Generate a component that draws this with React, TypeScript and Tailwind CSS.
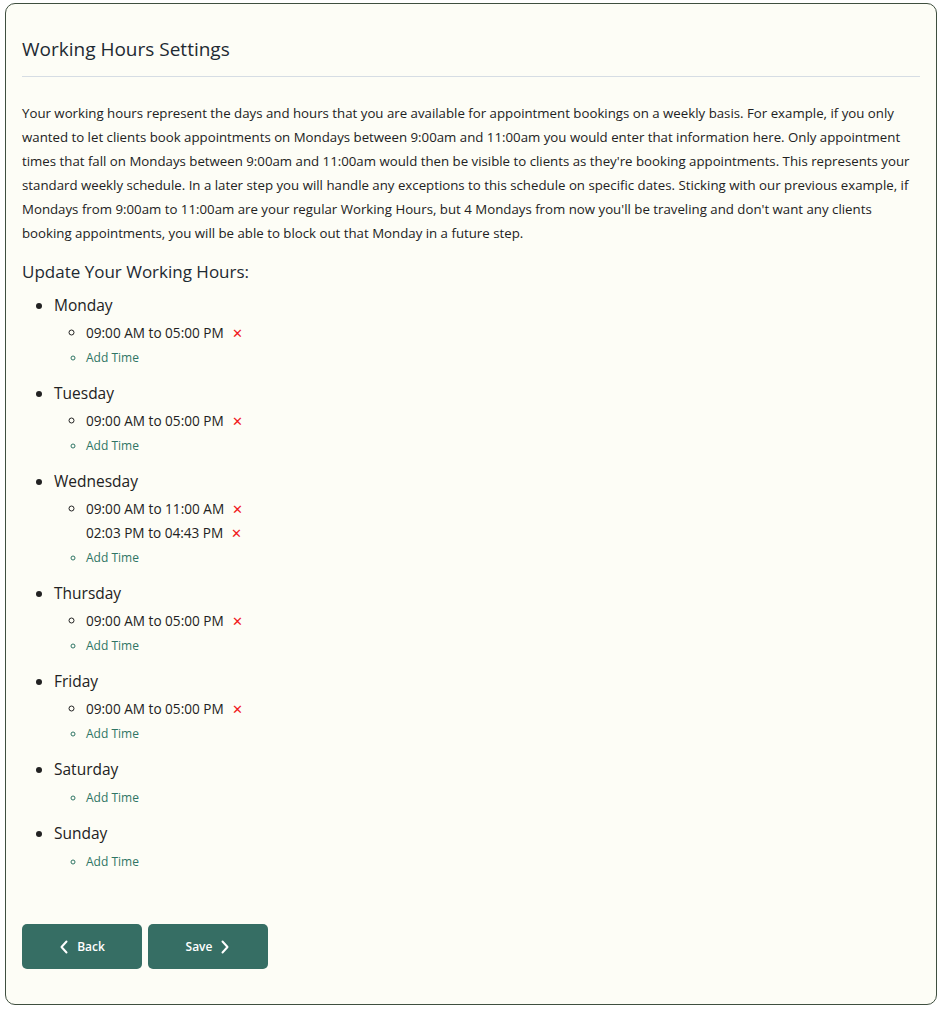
import React from "react";

type Day = { name: string; slots: string[] };

const days: Day[] = [
	{ name: "Monday", slots: ["09:00 AM to 05:00 PM"] },
	{ name: "Tuesday", slots: ["09:00 AM to 05:00 PM"] },
	{ name: "Wednesday", slots: ["09:00 AM to 11:00 AM", "02:03 PM to 04:43 PM"] },
	{ name: "Thursday", slots: ["09:00 AM to 05:00 PM"] },
	{ name: "Friday", slots: ["09:00 AM to 05:00 PM"] },
	{ name: "Saturday", slots: [] },
	{ name: "Sunday", slots: [] },
];

function ChevronLeft() {
	return (
		<svg width="10" height="14" viewBox="0 0 10 14" fill="none">
			<path d="M7.5 1.5 L2.5 7 L7.5 12.5" stroke="white" strokeWidth="2" strokeLinecap="round" strokeLinejoin="round" />
		</svg>
	);
}

function ChevronRight() {
	return (
		<svg width="10" height="14" viewBox="0 0 10 14" fill="none">
			<path d="M2.5 1.5 L7.5 7 L2.5 12.5" stroke="white" strokeWidth="2" strokeLinecap="round" strokeLinejoin="round" />
		</svg>
	);
}

export default function App() {
	return (
		<div className="min-h-[1014px] bg-white pt-[3px] pl-[5px] pr-[7px] font-['Open_Sans',sans-serif]">
			<div className="bg-[#fdfdf6] border border-[#3f4f3f] rounded-[10px] px-4 pt-[31px] pb-[35px] min-h-[1002px]">
				<h1 className="text-[19px] leading-[28px] text-[#1e2a32]">Working Hours Settings</h1>
				<div className="mt-[13px] border-t border-[#d6dde4]" />
				<p className="mt-[24px] text-[13.25px] leading-[24px] text-[#222]">
					Your working hours represent the days and hours that you are available for appointment bookings on a
					weekly basis. For example, if you only wanted to let clients book appointments on Mondays between
					9:00am and 11:00am you would enter that information here. Only appointment times that fall on Mondays
					between 9:00am and 11:00am would then be visible to clients as they're booking appointments. This
					represents your standard weekly schedule. In a later step you will handle any exceptions to this
					schedule on specific dates. Sticking with our previous example, if Mondays from 9:00am to 11:00am are
					your regular Working Hours, but 4 Mondays from now you'll be traveling and don't want any clients
					booking appointments, you will be able to block out that Monday in a future step.
				</p>
				<h2 className="mt-[14px] text-[17px] leading-[26px] text-[#1e2a32]">Update Your Working Hours:</h2>
				<ul className="list-disc pl-8 mt-[4px] text-[#222]">
					{days.map((day) => (
						<li key={day.name} className="mb-[6px]">
							<div className="text-[15.5px] leading-[32px]">{day.name}</div>
							<ul className="list-[circle] pl-8">
								{day.slots.length > 0 && (
									<li className="text-[13.6px] leading-[24px]">
										{day.slots.map((slot) => (
											<div key={slot} className="flex items-center gap-[8px]">
												<span>{slot}</span>
												<span className="text-[#f01820] text-[13px] leading-none">✕</span>
											</div>
										))}
									</li>
								)}
								<li className="text-[12px] leading-[26px] text-[#2f7565]">Add Time</li>
							</ul>
						</li>
					))}
				</ul>
				<div className="mt-[49px] flex gap-[6px]">
					<button className="w-[120px] h-[45px] rounded-[5px] bg-[#366e64] text-white text-[12px] font-semibold flex items-center justify-center gap-[8px]">
						<ChevronLeft />
						<span>Back</span>
					</button>
					<button className="w-[120px] h-[45px] rounded-[5px] bg-[#366e64] text-white text-[12px] font-semibold flex items-center justify-center gap-[8px]">
						<span>Save</span>
						<ChevronRight />
					</button>
				</div>
			</div>
		</div>
	);
}
